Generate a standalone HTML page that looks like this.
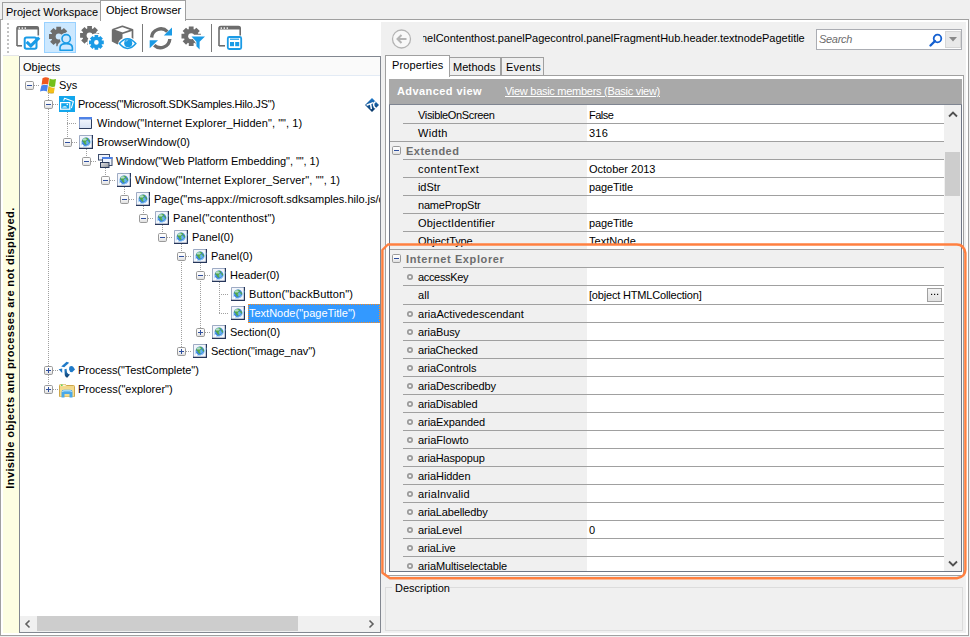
<!DOCTYPE html>
<html><head><meta charset="utf-8">
<style>
*{margin:0;padding:0;box-sizing:border-box}
html,body{width:970px;height:637px;overflow:hidden;background:#f0f0f0;font-family:"Liberation Sans",sans-serif;font-size:11px;color:#000}
.a{position:absolute}
.t{position:absolute;white-space:nowrap;line-height:13px}
svg{position:absolute;overflow:visible}
</style></head><body>

<div class="a" style="left:0px;top:19px;width:969px;height:617px;background:#fff;border:1px solid #a0a0a0"></div>
<div class="a" style="left:2px;top:2px;width:99px;height:18px;background:#f0f0f0;border:1px solid #a0a0a0;border-bottom:none"></div>
<div class="t" style="left:6px;top:6px;">Project Workspace</div>
<div class="a" style="left:100px;top:0px;width:86px;height:21px;background:#fff;border:1px solid #a0a0a0;border-bottom:none"></div>
<div class="t" style="left:106px;top:4px;">Object Browser</div>
<div class="a" style="left:3px;top:55px;width:16px;height:1px;background:#e4e6ea;"></div>
<div class="a" style="left:3px;top:56px;width:16px;height:577px;background:#fdfee2;"></div>
<div class="a" style="left:19px;top:56px;width:362px;height:577px;background:#fff;border:1px solid #828790"></div>
<div class="a" style="left:7px;top:23px;width:2px;height:30px;background:repeating-linear-gradient(to bottom,#c2c2c2 0 2px,transparent 2px 4px)"></div>
<svg style="left:0px;top:0px;" width="250" height="56" viewBox="0 0 250 56"><path d="M17 46V28.5a1.8 1.8 0 0 1 1.8-1.8H36.5a1.8 1.8 0 0 1 1.8 1.8V35.5" fill="none" stroke="#6d6d6d" stroke-width="1.6"/><rect x="17" y="26.5" width="21.3" height="3" fill="#6d6d6d"/><path d="M17 45.8H22" stroke="#6d6d6d" stroke-width="1.6"/><rect x="18.6" y="27.4" width="1.4" height="1.4" fill="#fff"/><rect x="21.6" y="27.4" width="1.4" height="1.4" fill="#fff"/><rect x="24.6" y="27.4" width="1.4" height="1.4" fill="#fff"/><rect x="24.7" y="37.4" width="11.8" height="11.4" rx="1.8" fill="#fff" stroke="#1a9be6" stroke-width="2"/><path d="M39 36.2L40.2 37.6" stroke="#fff" stroke-width="3"/><path d="M26.6 41.8l4.2 4 8.4-8.2" fill="none" stroke="#1a9be6" stroke-width="3.2" stroke-linejoin="miter"/></svg>
<div class="a" style="left:44px;top:22px;width:32px;height:31px;background:#cce8ff;border:1px solid #99d1ff"></div>
<svg style="left:0px;top:0px;" width="250" height="56" viewBox="0 0 250 56"><path d="M65.54 33.67 L65.70 34.11 L68.41 34.09 L68.41 38.91 L65.70 38.89 L65.54 39.33 L65.34 39.76 L67.27 41.66 L63.86 45.07 L61.96 43.14 L61.53 43.34 L61.09 43.50 L61.11 46.21 L56.29 46.21 L56.31 43.50 L55.87 43.34 L55.44 43.14 L53.54 45.07 L50.13 41.66 L52.06 39.76 L51.86 39.33 L51.70 38.89 L48.99 38.91 L48.99 34.09 L51.70 34.11 L51.86 33.67 L52.06 33.24 L50.13 31.34 L53.54 27.93 L55.44 29.86 L55.87 29.66 L56.31 29.50 L56.29 26.79 L61.11 26.79 L61.09 29.50 L61.53 29.66 L61.96 29.86 L63.86 27.93 L67.27 31.34 L65.34 33.24Z" fill="#6d6d6d"/><circle cx="66" cy="39" r="6.2" fill="#cce8ff"/><rect x="57.5" y="41.5" width="17" height="11" rx="5" fill="#cce8ff"/><circle cx="58.7" cy="36.5" r="3" fill="#cce8ff"/><path d="M60 50.2V47.8C60 45 62.6 43.6 66.2 43.6S72.4 45 72.4 47.8V50.2z" fill="#cce8ff" stroke="#1a9be6" stroke-width="1.6" stroke-linejoin="round"/><circle cx="66.2" cy="38.8" r="4.2" fill="#cce8ff" stroke="#1a9be6" stroke-width="1.6"/></svg>
<svg style="left:0px;top:0px;" width="250" height="56" viewBox="0 0 250 56"><path d="M96.25 32.64 L96.41 33.08 L99.11 33.04 L99.11 37.76 L96.41 37.72 L96.25 38.16 L96.06 38.58 L98.00 40.45 L94.65 43.80 L92.78 41.86 L92.36 42.05 L91.92 42.21 L91.96 44.91 L87.24 44.91 L87.28 42.21 L86.84 42.05 L86.42 41.86 L84.55 43.80 L81.20 40.45 L83.14 38.58 L82.95 38.16 L82.79 37.72 L80.09 37.76 L80.09 33.04 L82.79 33.08 L82.95 32.64 L83.14 32.22 L81.20 30.35 L84.55 27.00 L86.42 28.94 L86.84 28.75 L87.28 28.59 L87.24 25.89 L91.96 25.89 L91.92 28.59 L92.36 28.75 L92.78 28.94 L94.65 27.00 L98.00 30.35 L96.06 32.22Z" fill="#6d6d6d"/><circle cx="89.6" cy="35.4" r="3" fill="#fff"/><circle cx="96.4" cy="42.4" r="9.2" fill="#fff"/><path d="M101.76 40.18 L101.89 40.53 L103.78 40.57 L103.78 44.23 L101.89 44.27 L101.76 44.62 L101.61 44.96 L102.91 46.32 L100.32 48.91 L98.96 47.61 L98.62 47.76 L98.27 47.89 L98.23 49.78 L94.57 49.78 L94.53 47.89 L94.18 47.76 L93.84 47.61 L92.48 48.91 L89.89 46.32 L91.19 44.96 L91.04 44.62 L90.91 44.27 L89.02 44.23 L89.02 40.57 L90.91 40.53 L91.04 40.18 L91.19 39.84 L89.89 38.48 L92.48 35.89 L93.84 37.19 L94.18 37.04 L94.53 36.91 L94.57 35.02 L98.23 35.02 L98.27 36.91 L98.62 37.04 L98.96 37.19 L100.32 35.89 L102.91 38.48 L101.61 39.84Z M98.70 42.40 A2.3 2.3 0 1 0 94.10 42.40 A2.3 2.3 0 1 0 98.70 42.40Z" fill="#1a9be6" fill-rule="evenodd"/></svg>
<svg style="left:0px;top:0px;" width="250" height="56" viewBox="0 0 250 56"><path d="M112.5 29.8L122.4 26.3 132.5 29.9V40" fill="none" stroke="#6d6d6d" stroke-width="1.7" stroke-linejoin="round"/><path d="M112.5 29.8L122.5 33.2 132.5 29.9" fill="none" stroke="#6d6d6d" stroke-width="1.7" stroke-linejoin="round"/><path d="M111.8 29.6L122.5 33.4V40.5L117.5 44.6 111.8 41.6z" fill="#6d6d6d"/><ellipse cx="127.6" cy="43.6" rx="9.6" ry="6.3" fill="#fff"/><path d="M119.4 43.6Q127.6 33.8 135.8 43.6Q127.6 53.4 119.4 43.6z" fill="#fff" stroke="#1a9be6" stroke-width="1.6"/><circle cx="128.2" cy="43.2" r="4" fill="#1a9be6"/><path d="M126 41.5a2.2 2.2 0 0 1 1.6-1.3" stroke="#fff" stroke-width=".7" fill="none"/></svg>
<div class="a" style="left:142px;top:24px;width:1px;height:28px;background:#7a7a7a;"></div>
<div class="a" style="left:211px;top:24px;width:1px;height:28px;background:#7a7a7a;"></div>
<svg style="left:0px;top:0px;" width="250" height="56" viewBox="0 0 250 56"><path d="M151.6 37.5A9.3 9.3 0 0 1 167.4 31.6" fill="none" stroke="#6d6d6d" stroke-width="3.4"/><path d="M169.8 39A9.3 9.3 0 0 1 154.2 45.2" fill="none" stroke="#6d6d6d" stroke-width="3.4"/><path d="M163.8 35.6L172 27.5V35.6z" fill="#1a9be6"/><path d="M149.7 40.2H158L149.7 48.2z" fill="#1a9be6"/></svg>
<svg style="left:0px;top:0px;" width="250" height="56" viewBox="0 0 250 56"><path d="M198.04 33.37 L198.20 33.81 L200.91 33.79 L200.91 38.61 L198.20 38.59 L198.04 39.03 L197.84 39.46 L199.77 41.36 L196.36 44.77 L194.46 42.84 L194.03 43.04 L193.59 43.20 L193.61 45.91 L188.79 45.91 L188.81 43.20 L188.37 43.04 L187.94 42.84 L186.04 44.77 L182.63 41.36 L184.56 39.46 L184.36 39.03 L184.20 38.59 L181.49 38.61 L181.49 33.79 L184.20 33.81 L184.36 33.37 L184.56 32.94 L182.63 31.04 L186.04 27.63 L187.94 29.56 L188.37 29.36 L188.81 29.20 L188.79 26.49 L193.61 26.49 L193.59 29.20 L194.03 29.36 L194.46 29.56 L196.36 27.63 L199.77 31.04 L197.84 32.94Z" fill="#6d6d6d"/><circle cx="191.2" cy="36.2" r="3" fill="#fff"/><path d="M189.5 34.8H207L200.8 42.5V51.3L195.5 47V42.5z" fill="#fff"/><path d="M191.5 36.4H205L199.6 41.8V49.4L196.4 46.2V41.8z" fill="#1a9be6"/></svg>
<svg style="left:0px;top:0px;" width="250" height="56" viewBox="0 0 250 56"><path d="M219 46V28.3a1.8 1.8 0 0 1 1.8-1.8H238.4a1.8 1.8 0 0 1 1.8 1.8V35.5" fill="none" stroke="#6d6d6d" stroke-width="1.6"/><rect x="219" y="26.5" width="21.2" height="3" fill="#6d6d6d"/><path d="M219 45.8H225" stroke="#6d6d6d" stroke-width="1.6"/><rect x="220.6" y="27.4" width="1.4" height="1.4" fill="#fff"/><rect x="223.6" y="27.4" width="1.4" height="1.4" fill="#fff"/><rect x="226.6" y="27.4" width="1.4" height="1.4" fill="#fff"/><rect x="227.8" y="37" width="13.4" height="12" rx="1.5" fill="#fff" stroke="#1a9be6" stroke-width="1.8"/><rect x="230" y="38.6" width="9" height="1.2" fill="#1a9be6"/><rect x="230" y="42" width="4" height="4.2" fill="#1a9be6"/><rect x="235.2" y="42" width="4" height="4.2" fill="#1a9be6"/></svg>
<div class="a" style="left:20px;top:57px;width:360px;height:559px;overflow:hidden">
<div class="a" style="left:0px;top:0px;width:360px;height:18px;background:#fafafa;"></div>
<div class="a" style="left:0px;top:18px;width:360px;height:1px;background:#e3ebf5;"></div>
<div class="t" style="left:3px;top:2px;line-height:16px">Objects</div>
<div class="a" style="left:28px;top:36px;width:1px;height:297px;background:repeating-linear-gradient(to bottom,#a0a0a0 0 1px,transparent 1px 2px)"></div>
<div class="a" style="left:47px;top:55px;width:1px;height:31px;background:repeating-linear-gradient(to bottom,#a0a0a0 0 1px,transparent 1px 2px)"></div>
<div class="a" style="left:66px;top:92px;width:1px;height:13px;background:repeating-linear-gradient(to bottom,#a0a0a0 0 1px,transparent 1px 2px)"></div>
<div class="a" style="left:85px;top:111px;width:1px;height:13px;background:repeating-linear-gradient(to bottom,#a0a0a0 0 1px,transparent 1px 2px)"></div>
<div class="a" style="left:104px;top:130px;width:1px;height:13px;background:repeating-linear-gradient(to bottom,#a0a0a0 0 1px,transparent 1px 2px)"></div>
<div class="a" style="left:123px;top:149px;width:1px;height:13px;background:repeating-linear-gradient(to bottom,#a0a0a0 0 1px,transparent 1px 2px)"></div>
<div class="a" style="left:142px;top:168px;width:1px;height:13px;background:repeating-linear-gradient(to bottom,#a0a0a0 0 1px,transparent 1px 2px)"></div>
<div class="a" style="left:161px;top:187px;width:1px;height:108px;background:repeating-linear-gradient(to bottom,#a0a0a0 0 1px,transparent 1px 2px)"></div>
<div class="a" style="left:180px;top:206px;width:1px;height:70px;background:repeating-linear-gradient(to bottom,#a0a0a0 0 1px,transparent 1px 2px)"></div>
<div class="a" style="left:199px;top:225px;width:1px;height:32px;background:repeating-linear-gradient(to bottom,#a0a0a0 0 1px,transparent 1px 2px)"></div>
<div class="a" style="left:14px;top:28px;width:5px;height:1px;background:repeating-linear-gradient(to right,#a0a0a0 0 1px,transparent 1px 2px)"></div>
<svg style="left:5px;top:24px;" width="9" height="9" viewBox="0 0 9 9"><defs><linearGradient id="bg" x1="0" y1="0" x2="0" y2="1"><stop offset="0" stop-color="#fff"/><stop offset="0.5" stop-color="#f6f6f6"/><stop offset="1" stop-color="#dcdcdc"/></linearGradient></defs><rect x="0.5" y="0.5" width="8" height="8" rx="1.2" fill="url(#bg)" stroke="#9a9a9a"/><rect x="2" y="4" width="5" height="1" fill="#2f4f9e"/></svg>
<svg style="left:20px;top:20px;" width="16" height="16" viewBox="0 0 16 16"><path d="M2.5 1.2Q5.5-.4 9 1L8.2 7.6Q5 6.4 1.6 7.8z" fill="#f0581e"/><path d="M9.6 1.5Q12.5 3 16 2L15 9.6Q11.8 10.6 8.8 8.4z" fill="#74c01a"/><path d="M1.4 8.4Q4.6 7 7.9 8.3L7 14.4Q3.8 13.2 0 14.4z" fill="#4a82ee"/><path d="M8.6 9.2Q11.6 11.2 14.8 10.4L13.8 16Q10.6 17 7.6 15.2z" fill="#f4bf1a"/><path d="M8.4 14.8L9.2 8.8M7.6 15.4Q10.6 17 13.8 16" fill="none" stroke="#7a6a20" stroke-width=".6" opacity=".6"/></svg>
<div class="t" style="left:39px;top:19px;line-height:19px">Sys</div>
<div class="a" style="left:33px;top:47px;width:5px;height:1px;background:repeating-linear-gradient(to right,#a0a0a0 0 1px,transparent 1px 2px)"></div>
<svg style="left:24px;top:43px;" width="9" height="9" viewBox="0 0 9 9"><defs><linearGradient id="bg" x1="0" y1="0" x2="0" y2="1"><stop offset="0" stop-color="#fff"/><stop offset="0.5" stop-color="#f6f6f6"/><stop offset="1" stop-color="#dcdcdc"/></linearGradient></defs><rect x="0.5" y="0.5" width="8" height="8" rx="1.2" fill="url(#bg)" stroke="#9a9a9a"/><rect x="2" y="4" width="5" height="1" fill="#2f4f9e"/></svg>
<svg style="left:39px;top:39px;" width="16" height="16" viewBox="0 0 16 16"><rect x="0" y="0" width="16" height="16" fill="#12a6ec"/><path d="M4.6 4.6L5.6 2.3 14.4 5.4 12.4 12.2" fill="none" stroke="#fff" stroke-width="1.1" stroke-linejoin="round"/><rect x="1.6" y="6.6" width="9.2" height="6.6" fill="#12a6ec" stroke="#fff" stroke-width="1.2"/><path d="M3.2 11.6c.4-1 1.2-1.4 1.9-1 .4-.6 1.2-.6 1.6 0 .6-.1 1.2.3 1.3 1z" fill="#fff"/><circle cx="8.3" cy="8.5" r=".8" fill="#fff"/></svg>
<div class="t" style="left:58px;top:38px;line-height:19px;letter-spacing:-0.231px">Process(&quot;Microsoft.SDKSamples.Hilo.JS&quot;)</div>
<div class="a" style="left:47px;top:66px;width:10px;height:1px;background:repeating-linear-gradient(to right,#a0a0a0 0 1px,transparent 1px 2px)"></div>
<svg style="left:59px;top:60px;" width="13" height="12" viewBox="0 0 13 12"><defs><linearGradient id="wg" x1="0" y1="0" x2="0" y2="1"><stop offset="0" stop-color="#f8fbff"/><stop offset="1" stop-color="#d4e0f2"/></linearGradient></defs><rect x="0" y="0" width="13" height="12" fill="url(#wg)"/><path d="M0.5 11.5V0.5H12.5" fill="none" stroke="#8ca0c8"/><path d="M0 11.5H12.5V0" fill="none" stroke="#2c3c5c"/><rect x="0" y="0" width="13" height="2.5" fill="#4f82e6"/></svg>
<div class="t" style="left:77px;top:57px;line-height:19px;letter-spacing:0.061px">Window(&quot;Internet Explorer_Hidden&quot;, &quot;&quot;, 1)</div>
<div class="a" style="left:52px;top:85px;width:5px;height:1px;background:repeating-linear-gradient(to right,#a0a0a0 0 1px,transparent 1px 2px)"></div>
<svg style="left:43px;top:81px;" width="9" height="9" viewBox="0 0 9 9"><defs><linearGradient id="bg" x1="0" y1="0" x2="0" y2="1"><stop offset="0" stop-color="#fff"/><stop offset="0.5" stop-color="#f6f6f6"/><stop offset="1" stop-color="#dcdcdc"/></linearGradient></defs><rect x="0.5" y="0.5" width="8" height="8" rx="1.2" fill="url(#bg)" stroke="#9a9a9a"/><rect x="2" y="4" width="5" height="1" fill="#2f4f9e"/></svg>
<svg style="left:59px;top:78px;" width="14" height="14" viewBox="0 0 14 14"><rect x="0" y="0" width="14" height="14" fill="#f2f5fb"/><path d="M0.5 13.5V0.5H13.5" fill="none" stroke="#9eabc4"/><path d="M0 13.4H13.4V0" fill="none" stroke="#26365a" stroke-width="1.2"/><circle cx="7" cy="6.8" r="4.4" fill="#3f86e0"/><path d="M4.4 3.6c1.4-1 3.2-1 4.4-.4.8.5.4 1.4-.4 1.7-.9.4-1.4 1.2-.8 2 .5.7.4 1.9-.3 2.6-.8.6-1.8 0-2.1-.9-.3-1-1-1.4-1.6-2-.6-.8-.2-2.3.8-3z" fill="#52a848"/><path d="M9.6 4.4c.9.7 1.6 1.8 1.6 2.9-.7.3-1.5-.2-1.7-.9-.3-.6-.4-1.4.1-2z" fill="#52a848"/><ellipse cx="5.6" cy="4.4" rx="2" ry="1.2" fill="#d8f4ff" opacity=".7"/><ellipse cx="8.2" cy="7.6" rx="1.6" ry="1.8" fill="#7fd4ff" opacity=".55"/><path d="M3 10.8c-1-1.2-.6-2.6.2-3.6M4 11.2c2.4.8 5.6-.6 7.6-3.4 1-1.4 1.6-3 1.2-4.2" fill="none" stroke="#9ad4fa" stroke-width=".8"/><circle cx="3.4" cy="10.6" r=".9" fill="#fff"/></svg>
<div class="t" style="left:77px;top:76px;line-height:19px">BrowserWindow(0)</div>
<div class="a" style="left:71px;top:104px;width:5px;height:1px;background:repeating-linear-gradient(to right,#a0a0a0 0 1px,transparent 1px 2px)"></div>
<svg style="left:62px;top:100px;" width="9" height="9" viewBox="0 0 9 9"><defs><linearGradient id="bg" x1="0" y1="0" x2="0" y2="1"><stop offset="0" stop-color="#fff"/><stop offset="0.5" stop-color="#f6f6f6"/><stop offset="1" stop-color="#dcdcdc"/></linearGradient></defs><rect x="0.5" y="0.5" width="8" height="8" rx="1.2" fill="url(#bg)" stroke="#9a9a9a"/><rect x="2" y="4" width="5" height="1" fill="#2f4f9e"/></svg>
<svg style="left:78px;top:97px;" width="15" height="14" viewBox="0 0 15 14"><rect x="0.5" y="0.5" width="11" height="5.5" fill="#eef3fb" stroke="#3c4c6c"/><rect x="4.5" y="3.5" width="9.5" height="8" fill="#eef4fd" stroke="#3c4c6c"/><rect x="4" y="3" width="10.5" height="2" fill="#4f82e6"/><defs><linearGradient id="mg" x1="0" y1="0" x2="1" y2="1"><stop offset="0" stop-color="#e8e8e8"/><stop offset="1" stop-color="#8a8f98"/></linearGradient></defs><rect x="2.5" y="8.5" width="8.5" height="5" fill="url(#mg)" stroke="#2c3c5c"/></svg>
<div class="t" style="left:96px;top:95px;line-height:19px;letter-spacing:-0.059px">Window(&quot;Web Platform Embedding&quot;, &quot;&quot;, 1)</div>
<div class="a" style="left:90px;top:123px;width:5px;height:1px;background:repeating-linear-gradient(to right,#a0a0a0 0 1px,transparent 1px 2px)"></div>
<svg style="left:81px;top:119px;" width="9" height="9" viewBox="0 0 9 9"><defs><linearGradient id="bg" x1="0" y1="0" x2="0" y2="1"><stop offset="0" stop-color="#fff"/><stop offset="0.5" stop-color="#f6f6f6"/><stop offset="1" stop-color="#dcdcdc"/></linearGradient></defs><rect x="0.5" y="0.5" width="8" height="8" rx="1.2" fill="url(#bg)" stroke="#9a9a9a"/><rect x="2" y="4" width="5" height="1" fill="#2f4f9e"/></svg>
<svg style="left:97px;top:116px;" width="14" height="14" viewBox="0 0 14 14"><rect x="0" y="0" width="14" height="14" fill="#f2f5fb"/><path d="M0.5 13.5V0.5H13.5" fill="none" stroke="#9eabc4"/><path d="M0 13.4H13.4V0" fill="none" stroke="#26365a" stroke-width="1.2"/><circle cx="7" cy="6.8" r="4.4" fill="#3f86e0"/><path d="M4.4 3.6c1.4-1 3.2-1 4.4-.4.8.5.4 1.4-.4 1.7-.9.4-1.4 1.2-.8 2 .5.7.4 1.9-.3 2.6-.8.6-1.8 0-2.1-.9-.3-1-1-1.4-1.6-2-.6-.8-.2-2.3.8-3z" fill="#52a848"/><path d="M9.6 4.4c.9.7 1.6 1.8 1.6 2.9-.7.3-1.5-.2-1.7-.9-.3-.6-.4-1.4.1-2z" fill="#52a848"/><ellipse cx="5.6" cy="4.4" rx="2" ry="1.2" fill="#d8f4ff" opacity=".7"/><ellipse cx="8.2" cy="7.6" rx="1.6" ry="1.8" fill="#7fd4ff" opacity=".55"/><path d="M3 10.8c-1-1.2-.6-2.6.2-3.6M4 11.2c2.4.8 5.6-.6 7.6-3.4 1-1.4 1.6-3 1.2-4.2" fill="none" stroke="#9ad4fa" stroke-width=".8"/><circle cx="3.4" cy="10.6" r=".9" fill="#fff"/></svg>
<div class="t" style="left:115px;top:114px;line-height:19px;letter-spacing:0.117px">Window(&quot;Internet Explorer_Server&quot;, &quot;&quot;, 1)</div>
<div class="a" style="left:109px;top:142px;width:5px;height:1px;background:repeating-linear-gradient(to right,#a0a0a0 0 1px,transparent 1px 2px)"></div>
<svg style="left:100px;top:138px;" width="9" height="9" viewBox="0 0 9 9"><defs><linearGradient id="bg" x1="0" y1="0" x2="0" y2="1"><stop offset="0" stop-color="#fff"/><stop offset="0.5" stop-color="#f6f6f6"/><stop offset="1" stop-color="#dcdcdc"/></linearGradient></defs><rect x="0.5" y="0.5" width="8" height="8" rx="1.2" fill="url(#bg)" stroke="#9a9a9a"/><rect x="2" y="4" width="5" height="1" fill="#2f4f9e"/></svg>
<svg style="left:116px;top:135px;" width="14" height="14" viewBox="0 0 14 14"><rect x="0" y="0" width="14" height="14" fill="#f2f5fb"/><path d="M0.5 13.5V0.5H13.5" fill="none" stroke="#9eabc4"/><path d="M0 13.4H13.4V0" fill="none" stroke="#26365a" stroke-width="1.2"/><circle cx="7" cy="6.8" r="4.4" fill="#3f86e0"/><path d="M4.4 3.6c1.4-1 3.2-1 4.4-.4.8.5.4 1.4-.4 1.7-.9.4-1.4 1.2-.8 2 .5.7.4 1.9-.3 2.6-.8.6-1.8 0-2.1-.9-.3-1-1-1.4-1.6-2-.6-.8-.2-2.3.8-3z" fill="#52a848"/><path d="M9.6 4.4c.9.7 1.6 1.8 1.6 2.9-.7.3-1.5-.2-1.7-.9-.3-.6-.4-1.4.1-2z" fill="#52a848"/><ellipse cx="5.6" cy="4.4" rx="2" ry="1.2" fill="#d8f4ff" opacity=".7"/><ellipse cx="8.2" cy="7.6" rx="1.6" ry="1.8" fill="#7fd4ff" opacity=".55"/><path d="M3 10.8c-1-1.2-.6-2.6.2-3.6M4 11.2c2.4.8 5.6-.6 7.6-3.4 1-1.4 1.6-3 1.2-4.2" fill="none" stroke="#9ad4fa" stroke-width=".8"/><circle cx="3.4" cy="10.6" r=".9" fill="#fff"/></svg>
<div class="t" style="left:134px;top:133px;line-height:19px">Page(&quot;ms-appx://microsoft.sdksamples.hilo.js/default.html&quot;)</div>
<div class="a" style="left:128px;top:161px;width:5px;height:1px;background:repeating-linear-gradient(to right,#a0a0a0 0 1px,transparent 1px 2px)"></div>
<svg style="left:119px;top:157px;" width="9" height="9" viewBox="0 0 9 9"><defs><linearGradient id="bg" x1="0" y1="0" x2="0" y2="1"><stop offset="0" stop-color="#fff"/><stop offset="0.5" stop-color="#f6f6f6"/><stop offset="1" stop-color="#dcdcdc"/></linearGradient></defs><rect x="0.5" y="0.5" width="8" height="8" rx="1.2" fill="url(#bg)" stroke="#9a9a9a"/><rect x="2" y="4" width="5" height="1" fill="#2f4f9e"/></svg>
<svg style="left:135px;top:154px;" width="14" height="14" viewBox="0 0 14 14"><rect x="0" y="0" width="14" height="14" fill="#f2f5fb"/><path d="M0.5 13.5V0.5H13.5" fill="none" stroke="#9eabc4"/><path d="M0 13.4H13.4V0" fill="none" stroke="#26365a" stroke-width="1.2"/><circle cx="7" cy="6.8" r="4.4" fill="#3f86e0"/><path d="M4.4 3.6c1.4-1 3.2-1 4.4-.4.8.5.4 1.4-.4 1.7-.9.4-1.4 1.2-.8 2 .5.7.4 1.9-.3 2.6-.8.6-1.8 0-2.1-.9-.3-1-1-1.4-1.6-2-.6-.8-.2-2.3.8-3z" fill="#52a848"/><path d="M9.6 4.4c.9.7 1.6 1.8 1.6 2.9-.7.3-1.5-.2-1.7-.9-.3-.6-.4-1.4.1-2z" fill="#52a848"/><ellipse cx="5.6" cy="4.4" rx="2" ry="1.2" fill="#d8f4ff" opacity=".7"/><ellipse cx="8.2" cy="7.6" rx="1.6" ry="1.8" fill="#7fd4ff" opacity=".55"/><path d="M3 10.8c-1-1.2-.6-2.6.2-3.6M4 11.2c2.4.8 5.6-.6 7.6-3.4 1-1.4 1.6-3 1.2-4.2" fill="none" stroke="#9ad4fa" stroke-width=".8"/><circle cx="3.4" cy="10.6" r=".9" fill="#fff"/></svg>
<div class="t" style="left:153px;top:152px;line-height:19px;letter-spacing:0.100px">Panel(&quot;contenthost&quot;)</div>
<div class="a" style="left:147px;top:180px;width:5px;height:1px;background:repeating-linear-gradient(to right,#a0a0a0 0 1px,transparent 1px 2px)"></div>
<svg style="left:138px;top:176px;" width="9" height="9" viewBox="0 0 9 9"><defs><linearGradient id="bg" x1="0" y1="0" x2="0" y2="1"><stop offset="0" stop-color="#fff"/><stop offset="0.5" stop-color="#f6f6f6"/><stop offset="1" stop-color="#dcdcdc"/></linearGradient></defs><rect x="0.5" y="0.5" width="8" height="8" rx="1.2" fill="url(#bg)" stroke="#9a9a9a"/><rect x="2" y="4" width="5" height="1" fill="#2f4f9e"/></svg>
<svg style="left:154px;top:173px;" width="14" height="14" viewBox="0 0 14 14"><rect x="0" y="0" width="14" height="14" fill="#f2f5fb"/><path d="M0.5 13.5V0.5H13.5" fill="none" stroke="#9eabc4"/><path d="M0 13.4H13.4V0" fill="none" stroke="#26365a" stroke-width="1.2"/><circle cx="7" cy="6.8" r="4.4" fill="#3f86e0"/><path d="M4.4 3.6c1.4-1 3.2-1 4.4-.4.8.5.4 1.4-.4 1.7-.9.4-1.4 1.2-.8 2 .5.7.4 1.9-.3 2.6-.8.6-1.8 0-2.1-.9-.3-1-1-1.4-1.6-2-.6-.8-.2-2.3.8-3z" fill="#52a848"/><path d="M9.6 4.4c.9.7 1.6 1.8 1.6 2.9-.7.3-1.5-.2-1.7-.9-.3-.6-.4-1.4.1-2z" fill="#52a848"/><ellipse cx="5.6" cy="4.4" rx="2" ry="1.2" fill="#d8f4ff" opacity=".7"/><ellipse cx="8.2" cy="7.6" rx="1.6" ry="1.8" fill="#7fd4ff" opacity=".55"/><path d="M3 10.8c-1-1.2-.6-2.6.2-3.6M4 11.2c2.4.8 5.6-.6 7.6-3.4 1-1.4 1.6-3 1.2-4.2" fill="none" stroke="#9ad4fa" stroke-width=".8"/><circle cx="3.4" cy="10.6" r=".9" fill="#fff"/></svg>
<div class="t" style="left:172px;top:171px;line-height:19px">Panel(0)</div>
<div class="a" style="left:166px;top:199px;width:5px;height:1px;background:repeating-linear-gradient(to right,#a0a0a0 0 1px,transparent 1px 2px)"></div>
<svg style="left:157px;top:195px;" width="9" height="9" viewBox="0 0 9 9"><defs><linearGradient id="bg" x1="0" y1="0" x2="0" y2="1"><stop offset="0" stop-color="#fff"/><stop offset="0.5" stop-color="#f6f6f6"/><stop offset="1" stop-color="#dcdcdc"/></linearGradient></defs><rect x="0.5" y="0.5" width="8" height="8" rx="1.2" fill="url(#bg)" stroke="#9a9a9a"/><rect x="2" y="4" width="5" height="1" fill="#2f4f9e"/></svg>
<svg style="left:173px;top:192px;" width="14" height="14" viewBox="0 0 14 14"><rect x="0" y="0" width="14" height="14" fill="#f2f5fb"/><path d="M0.5 13.5V0.5H13.5" fill="none" stroke="#9eabc4"/><path d="M0 13.4H13.4V0" fill="none" stroke="#26365a" stroke-width="1.2"/><circle cx="7" cy="6.8" r="4.4" fill="#3f86e0"/><path d="M4.4 3.6c1.4-1 3.2-1 4.4-.4.8.5.4 1.4-.4 1.7-.9.4-1.4 1.2-.8 2 .5.7.4 1.9-.3 2.6-.8.6-1.8 0-2.1-.9-.3-1-1-1.4-1.6-2-.6-.8-.2-2.3.8-3z" fill="#52a848"/><path d="M9.6 4.4c.9.7 1.6 1.8 1.6 2.9-.7.3-1.5-.2-1.7-.9-.3-.6-.4-1.4.1-2z" fill="#52a848"/><ellipse cx="5.6" cy="4.4" rx="2" ry="1.2" fill="#d8f4ff" opacity=".7"/><ellipse cx="8.2" cy="7.6" rx="1.6" ry="1.8" fill="#7fd4ff" opacity=".55"/><path d="M3 10.8c-1-1.2-.6-2.6.2-3.6M4 11.2c2.4.8 5.6-.6 7.6-3.4 1-1.4 1.6-3 1.2-4.2" fill="none" stroke="#9ad4fa" stroke-width=".8"/><circle cx="3.4" cy="10.6" r=".9" fill="#fff"/></svg>
<div class="t" style="left:191px;top:190px;line-height:19px">Panel(0)</div>
<div class="a" style="left:185px;top:218px;width:5px;height:1px;background:repeating-linear-gradient(to right,#a0a0a0 0 1px,transparent 1px 2px)"></div>
<svg style="left:176px;top:214px;" width="9" height="9" viewBox="0 0 9 9"><defs><linearGradient id="bg" x1="0" y1="0" x2="0" y2="1"><stop offset="0" stop-color="#fff"/><stop offset="0.5" stop-color="#f6f6f6"/><stop offset="1" stop-color="#dcdcdc"/></linearGradient></defs><rect x="0.5" y="0.5" width="8" height="8" rx="1.2" fill="url(#bg)" stroke="#9a9a9a"/><rect x="2" y="4" width="5" height="1" fill="#2f4f9e"/></svg>
<svg style="left:192px;top:211px;" width="14" height="14" viewBox="0 0 14 14"><rect x="0" y="0" width="14" height="14" fill="#f2f5fb"/><path d="M0.5 13.5V0.5H13.5" fill="none" stroke="#9eabc4"/><path d="M0 13.4H13.4V0" fill="none" stroke="#26365a" stroke-width="1.2"/><circle cx="7" cy="6.8" r="4.4" fill="#3f86e0"/><path d="M4.4 3.6c1.4-1 3.2-1 4.4-.4.8.5.4 1.4-.4 1.7-.9.4-1.4 1.2-.8 2 .5.7.4 1.9-.3 2.6-.8.6-1.8 0-2.1-.9-.3-1-1-1.4-1.6-2-.6-.8-.2-2.3.8-3z" fill="#52a848"/><path d="M9.6 4.4c.9.7 1.6 1.8 1.6 2.9-.7.3-1.5-.2-1.7-.9-.3-.6-.4-1.4.1-2z" fill="#52a848"/><ellipse cx="5.6" cy="4.4" rx="2" ry="1.2" fill="#d8f4ff" opacity=".7"/><ellipse cx="8.2" cy="7.6" rx="1.6" ry="1.8" fill="#7fd4ff" opacity=".55"/><path d="M3 10.8c-1-1.2-.6-2.6.2-3.6M4 11.2c2.4.8 5.6-.6 7.6-3.4 1-1.4 1.6-3 1.2-4.2" fill="none" stroke="#9ad4fa" stroke-width=".8"/><circle cx="3.4" cy="10.6" r=".9" fill="#fff"/></svg>
<div class="t" style="left:210px;top:209px;line-height:19px">Header(0)</div>
<div class="a" style="left:199px;top:237px;width:10px;height:1px;background:repeating-linear-gradient(to right,#a0a0a0 0 1px,transparent 1px 2px)"></div>
<svg style="left:211px;top:230px;" width="14" height="14" viewBox="0 0 14 14"><rect x="0" y="0" width="14" height="14" fill="#f2f5fb"/><path d="M0.5 13.5V0.5H13.5" fill="none" stroke="#9eabc4"/><path d="M0 13.4H13.4V0" fill="none" stroke="#26365a" stroke-width="1.2"/><circle cx="7" cy="6.8" r="4.4" fill="#3f86e0"/><path d="M4.4 3.6c1.4-1 3.2-1 4.4-.4.8.5.4 1.4-.4 1.7-.9.4-1.4 1.2-.8 2 .5.7.4 1.9-.3 2.6-.8.6-1.8 0-2.1-.9-.3-1-1-1.4-1.6-2-.6-.8-.2-2.3.8-3z" fill="#52a848"/><path d="M9.6 4.4c.9.7 1.6 1.8 1.6 2.9-.7.3-1.5-.2-1.7-.9-.3-.6-.4-1.4.1-2z" fill="#52a848"/><ellipse cx="5.6" cy="4.4" rx="2" ry="1.2" fill="#d8f4ff" opacity=".7"/><ellipse cx="8.2" cy="7.6" rx="1.6" ry="1.8" fill="#7fd4ff" opacity=".55"/><path d="M3 10.8c-1-1.2-.6-2.6.2-3.6M4 11.2c2.4.8 5.6-.6 7.6-3.4 1-1.4 1.6-3 1.2-4.2" fill="none" stroke="#9ad4fa" stroke-width=".8"/><circle cx="3.4" cy="10.6" r=".9" fill="#fff"/></svg>
<div class="t" style="left:229px;top:228px;line-height:19px;letter-spacing:0.100px">Button(&quot;backButton&quot;)</div>
<div class="a" style="left:199px;top:256px;width:10px;height:1px;background:repeating-linear-gradient(to right,#a0a0a0 0 1px,transparent 1px 2px)"></div>
<svg style="left:211px;top:249px;" width="14" height="14" viewBox="0 0 14 14"><rect x="0" y="0" width="14" height="14" fill="#f2f5fb"/><path d="M0.5 13.5V0.5H13.5" fill="none" stroke="#9eabc4"/><path d="M0 13.4H13.4V0" fill="none" stroke="#26365a" stroke-width="1.2"/><circle cx="7" cy="6.8" r="4.4" fill="#3f86e0"/><path d="M4.4 3.6c1.4-1 3.2-1 4.4-.4.8.5.4 1.4-.4 1.7-.9.4-1.4 1.2-.8 2 .5.7.4 1.9-.3 2.6-.8.6-1.8 0-2.1-.9-.3-1-1-1.4-1.6-2-.6-.8-.2-2.3.8-3z" fill="#52a848"/><path d="M9.6 4.4c.9.7 1.6 1.8 1.6 2.9-.7.3-1.5-.2-1.7-.9-.3-.6-.4-1.4.1-2z" fill="#52a848"/><ellipse cx="5.6" cy="4.4" rx="2" ry="1.2" fill="#d8f4ff" opacity=".7"/><ellipse cx="8.2" cy="7.6" rx="1.6" ry="1.8" fill="#7fd4ff" opacity=".55"/><path d="M3 10.8c-1-1.2-.6-2.6.2-3.6M4 11.2c2.4.8 5.6-.6 7.6-3.4 1-1.4 1.6-3 1.2-4.2" fill="none" stroke="#9ad4fa" stroke-width=".8"/><circle cx="3.4" cy="10.6" r=".9" fill="#fff"/></svg>
<div class="a" style="left:228px;top:247px;width:132px;height:19px;background:#3399ff;border:1px dotted #ff8a1a"></div>
<div class="t" style="left:229px;top:247px;line-height:19px;color:#fff">TextNode(&quot;pageTitle&quot;)</div>
<div class="a" style="left:185px;top:275px;width:5px;height:1px;background:repeating-linear-gradient(to right,#a0a0a0 0 1px,transparent 1px 2px)"></div>
<svg style="left:176px;top:271px;" width="9" height="9" viewBox="0 0 9 9"><defs><linearGradient id="bg" x1="0" y1="0" x2="0" y2="1"><stop offset="0" stop-color="#fff"/><stop offset="0.5" stop-color="#f6f6f6"/><stop offset="1" stop-color="#dcdcdc"/></linearGradient></defs><rect x="0.5" y="0.5" width="8" height="8" rx="1.2" fill="url(#bg)" stroke="#9a9a9a"/><rect x="2" y="4" width="5" height="1" fill="#2f4f9e"/><rect x="4" y="2" width="1" height="5" fill="#2f4f9e"/></svg>
<svg style="left:192px;top:268px;" width="14" height="14" viewBox="0 0 14 14"><rect x="0" y="0" width="14" height="14" fill="#f2f5fb"/><path d="M0.5 13.5V0.5H13.5" fill="none" stroke="#9eabc4"/><path d="M0 13.4H13.4V0" fill="none" stroke="#26365a" stroke-width="1.2"/><circle cx="7" cy="6.8" r="4.4" fill="#3f86e0"/><path d="M4.4 3.6c1.4-1 3.2-1 4.4-.4.8.5.4 1.4-.4 1.7-.9.4-1.4 1.2-.8 2 .5.7.4 1.9-.3 2.6-.8.6-1.8 0-2.1-.9-.3-1-1-1.4-1.6-2-.6-.8-.2-2.3.8-3z" fill="#52a848"/><path d="M9.6 4.4c.9.7 1.6 1.8 1.6 2.9-.7.3-1.5-.2-1.7-.9-.3-.6-.4-1.4.1-2z" fill="#52a848"/><ellipse cx="5.6" cy="4.4" rx="2" ry="1.2" fill="#d8f4ff" opacity=".7"/><ellipse cx="8.2" cy="7.6" rx="1.6" ry="1.8" fill="#7fd4ff" opacity=".55"/><path d="M3 10.8c-1-1.2-.6-2.6.2-3.6M4 11.2c2.4.8 5.6-.6 7.6-3.4 1-1.4 1.6-3 1.2-4.2" fill="none" stroke="#9ad4fa" stroke-width=".8"/><circle cx="3.4" cy="10.6" r=".9" fill="#fff"/></svg>
<div class="t" style="left:210px;top:266px;line-height:19px">Section(0)</div>
<div class="a" style="left:166px;top:294px;width:5px;height:1px;background:repeating-linear-gradient(to right,#a0a0a0 0 1px,transparent 1px 2px)"></div>
<svg style="left:157px;top:290px;" width="9" height="9" viewBox="0 0 9 9"><defs><linearGradient id="bg" x1="0" y1="0" x2="0" y2="1"><stop offset="0" stop-color="#fff"/><stop offset="0.5" stop-color="#f6f6f6"/><stop offset="1" stop-color="#dcdcdc"/></linearGradient></defs><rect x="0.5" y="0.5" width="8" height="8" rx="1.2" fill="url(#bg)" stroke="#9a9a9a"/><rect x="2" y="4" width="5" height="1" fill="#2f4f9e"/><rect x="4" y="2" width="1" height="5" fill="#2f4f9e"/></svg>
<svg style="left:173px;top:287px;" width="14" height="14" viewBox="0 0 14 14"><rect x="0" y="0" width="14" height="14" fill="#f2f5fb"/><path d="M0.5 13.5V0.5H13.5" fill="none" stroke="#9eabc4"/><path d="M0 13.4H13.4V0" fill="none" stroke="#26365a" stroke-width="1.2"/><circle cx="7" cy="6.8" r="4.4" fill="#3f86e0"/><path d="M4.4 3.6c1.4-1 3.2-1 4.4-.4.8.5.4 1.4-.4 1.7-.9.4-1.4 1.2-.8 2 .5.7.4 1.9-.3 2.6-.8.6-1.8 0-2.1-.9-.3-1-1-1.4-1.6-2-.6-.8-.2-2.3.8-3z" fill="#52a848"/><path d="M9.6 4.4c.9.7 1.6 1.8 1.6 2.9-.7.3-1.5-.2-1.7-.9-.3-.6-.4-1.4.1-2z" fill="#52a848"/><ellipse cx="5.6" cy="4.4" rx="2" ry="1.2" fill="#d8f4ff" opacity=".7"/><ellipse cx="8.2" cy="7.6" rx="1.6" ry="1.8" fill="#7fd4ff" opacity=".55"/><path d="M3 10.8c-1-1.2-.6-2.6.2-3.6M4 11.2c2.4.8 5.6-.6 7.6-3.4 1-1.4 1.6-3 1.2-4.2" fill="none" stroke="#9ad4fa" stroke-width=".8"/><circle cx="3.4" cy="10.6" r=".9" fill="#fff"/></svg>
<div class="t" style="left:191px;top:285px;line-height:19px;letter-spacing:-0.050px">Section(&quot;image_nav&quot;)</div>
<div class="a" style="left:33px;top:313px;width:5px;height:1px;background:repeating-linear-gradient(to right,#a0a0a0 0 1px,transparent 1px 2px)"></div>
<svg style="left:24px;top:309px;" width="9" height="9" viewBox="0 0 9 9"><defs><linearGradient id="bg" x1="0" y1="0" x2="0" y2="1"><stop offset="0" stop-color="#fff"/><stop offset="0.5" stop-color="#f6f6f6"/><stop offset="1" stop-color="#dcdcdc"/></linearGradient></defs><rect x="0.5" y="0.5" width="8" height="8" rx="1.2" fill="url(#bg)" stroke="#9a9a9a"/><rect x="2" y="4" width="5" height="1" fill="#2f4f9e"/><rect x="4" y="2" width="1" height="5" fill="#2f4f9e"/></svg>
<svg style="left:36px;top:303px;" width="20" height="20" viewBox="0 0 20 20"><defs><linearGradient id="tcg" x1="0" y1="0" x2="0" y2="1"><stop offset="0" stop-color="#2a86d0"/><stop offset="1" stop-color="#0c3a6a"/></linearGradient></defs><path d="M5.2 6.6L10.6 1.8 13.2 2.8 8.2 7.2z" fill="#1f7ac8"/><path d="M2.6 9.2L6.2 8.6 6.2 13z" fill="#1f7ac8"/><path d="M8.4 9.2L10.6 8.8 11 12.6Q12.2 14.4 14 14.6L11.2 17.8Q9.6 17.4 8.8 15.2z" fill="url(#tcg)"/><path d="M13.4 6.8Q15.6 5.4 17.2 6.8L19 9.6 16.2 12.2Q13.4 12 13 9.4z" fill="#1f7ac8"/></svg>
<div class="t" style="left:58px;top:304px;line-height:19px;letter-spacing:-0.057px">Process(&quot;TestComplete&quot;)</div>
<div class="a" style="left:33px;top:332px;width:5px;height:1px;background:repeating-linear-gradient(to right,#a0a0a0 0 1px,transparent 1px 2px)"></div>
<svg style="left:24px;top:328px;" width="9" height="9" viewBox="0 0 9 9"><defs><linearGradient id="bg" x1="0" y1="0" x2="0" y2="1"><stop offset="0" stop-color="#fff"/><stop offset="0.5" stop-color="#f6f6f6"/><stop offset="1" stop-color="#dcdcdc"/></linearGradient></defs><rect x="0.5" y="0.5" width="8" height="8" rx="1.2" fill="url(#bg)" stroke="#9a9a9a"/><rect x="2" y="4" width="5" height="1" fill="#2f4f9e"/><rect x="4" y="2" width="1" height="5" fill="#2f4f9e"/></svg>
<svg style="left:39px;top:326px;" width="16" height="16" viewBox="0 0 16 16"><path d="M0.5 2.5Q0.5 1.5 1.5 1.5H6.5L7.5 2.5H14.5Q15.5 2.5 15.5 3.5V13.5H0.5z" fill="#f2d88a" stroke="#cfa84a"/><rect x="1.5" y="1.5" width="5" height="1.6" fill="#fff6d8"/><rect x="2" y="1.6" width="1.6" height="1.2" fill="#3ad03a"/><path d="M1 5.5H15V13.5H1z" fill="#f4dc90"/><path d="M2.5 14.5V9.2Q2.5 6.8 5 6.8H11Q13.5 6.8 13.5 9.2V14.5H10.5V11H5.5V14.5z" fill="#4aa8e8"/><path d="M3.5 9Q3.5 7.8 5 7.8H11Q12.5 7.8 12.5 9" fill="none" stroke="#c8ecff" stroke-width="1"/></svg>
<div class="t" style="left:58px;top:323px;line-height:19px">Process(&quot;explorer&quot;)</div>
<svg style="left:345px;top:41px;" width="14" height="14" viewBox="0 0 14 14"><defs><linearGradient id="tdg" x1="0" y1="0" x2="0" y2="1"><stop offset="0" stop-color="#1f7acc"/><stop offset="1" stop-color="#0a3563"/></linearGradient></defs><path d="M7 0L14 7 7 14 0 7z" fill="url(#tdg)"/><path d="M1.6 7.2L8.2 4.6M5.6 6.2L6.4 11.2" fill="none" stroke="#fff" stroke-width="1.5"/><path d="M10.6 3.6Q8.4 4.4 8.6 7.2 8.9 9.6 11 10.4" fill="none" stroke="#fff" stroke-width="1.5"/></svg>
</div>
<div class="a" style="left:20px;top:616px;width:360px;height:16px;background:#f0f0f0;"></div>
<div class="a" style="left:37px;top:616px;width:261px;height:15px;background:#cdcdcd;"></div>
<svg style="left:24px;top:620px;" width="8" height="8" viewBox="0 0 8 8"><path d="M5.5 0.5L2 4l3.5 3.5" fill="none" stroke="#606060" stroke-width="1.6"/></svg>
<svg style="left:367px;top:620px;" width="8" height="8" viewBox="0 0 8 8"><path d="M2.5 0.5L6 4 2.5 7.5" fill="none" stroke="#606060" stroke-width="1.6"/></svg>
<div class="t" style="left:10px;top:347.5px;transform:translate(-50%,-50%) rotate(-90deg);font-weight:bold;letter-spacing:0.38px;line-height:13px">Invisible objects and processes are not displayed.</div>
<div class="a" style="left:381px;top:22px;width:585px;height:611px;background:#f0f0f0;"></div>
<svg style="left:392px;top:29px;" width="20" height="20" viewBox="0 0 20 20"><circle cx="9.5" cy="10" r="9" fill="#f8f8f8" stroke="#b4b4b4" stroke-width="1.3"/><path d="M14.5 10H5.5M9.5 6L5.5 10l4 4" fill="none" stroke="#b4b4b4" stroke-width="2"/></svg>
<div class="a" style="left:423px;top:28px;width:390px;height:20px;overflow:hidden">
<div class="t" style="left:-2px;top:4px;;letter-spacing:-0.013px">nelContenthost.panelPagecontrol.panelFragmentHub.header.textnodePagetitle</div>
</div>
<div class="a" style="left:816px;top:29px;width:146px;height:21px;background:#fff;border:1px solid #abadb3"></div>
<div class="t" style="left:819px;top:33px;font-style:italic;color:#6d6d6d;letter-spacing:-0.312px">Search</div>
<svg style="left:929px;top:33px;" width="14" height="14" viewBox="0 0 14 14"><circle cx="8.5" cy="5.5" r="3.8" fill="none" stroke="#1560d0" stroke-width="1.8"/><path d="M6 8L1.5 12.5" stroke="#1560d0" stroke-width="2.4" stroke-linecap="round"/></svg>
<div class="a" style="left:945px;top:31px;width:16px;height:17px;background:#e9e9e9;border:1px solid #d6d6d6"></div>
<svg style="left:949px;top:37px;" width="8" height="5" viewBox="0 0 8 5"><path d="M0 0H8L4 4.5z" fill="#8a8a8a"/></svg>
<div class="a" style="left:385px;top:75px;width:579px;height:501px;background:#fff;border:1px solid #a0a0a0"></div>
<div class="a" style="left:449px;top:57px;width:52px;height:19px;background:#f0f0f0;border:1px solid #a0a0a0"></div>
<div class="a" style="left:501px;top:57px;width:43px;height:19px;background:#f0f0f0;border:1px solid #a0a0a0"></div>
<div class="a" style="left:385px;top:55px;width:65px;height:22px;background:#fff;border:1px solid #a0a0a0;border-bottom:none"></div>
<div class="t" style="left:392px;top:59px;;letter-spacing:0.134px">Properties</div>
<div class="t" style="left:453px;top:61px;;letter-spacing:0.040px">Methods</div>
<div class="t" style="left:506px;top:61px;;letter-spacing:0.224px">Events</div>
<div class="a" style="left:389px;top:79px;width:573px;height:25px;background:#a9a9a9;"></div>
<div class="t" style="left:397px;top:85px;font-weight:bold;color:#fff;letter-spacing:0.421px">Advanced view</div>
<div class="t" style="left:505px;top:85px;color:#fff;text-decoration:underline;letter-spacing:-0.279px">View basic members (Basic view)</div>
<div class="a" style="left:389px;top:104px;width:573px;height:468px;background:#f0f0f0;border:1px solid #6f7685;border-top:none"></div>
<div class="a" style="left:389px;top:104px;width:573px;height:1px;background:#7f8591;"></div>
<div class="a" style="left:587px;top:105px;width:357px;height:466px;background:#fff;"></div>
<div class="a" style="left:944px;top:105px;width:17px;height:466px;background:#f0f0f0;"></div>
<div class="a" style="left:945px;top:152px;width:15px;height:44px;background:#cdcdcd;"></div>
<svg style="left:948px;top:111px;" width="10" height="6" viewBox="0 0 10 6"><path d="M1 5.5L5 1.5l4 4" fill="none" stroke="#505050" stroke-width="1.8"/></svg>
<svg style="left:948px;top:561px;" width="10" height="6" viewBox="0 0 10 6"><path d="M1 0.5L5 4.5l4-4" fill="none" stroke="#505050" stroke-width="1.8"/></svg>
<div class="a" style="left:390px;top:105px;width:571px;height:466px;overflow:hidden">
<div class="t" style="left:28px;top:2px;line-height:17px;letter-spacing:-0.343px">VisibleOnScreen</div>
<div class="t" style="left:199px;top:2px;line-height:17px;letter-spacing:-0.525px">False</div>
<div class="t" style="left:28px;top:20px;line-height:17px;letter-spacing:0.325px">Width</div>
<div class="t" style="left:199px;top:20px;line-height:17px;letter-spacing:0.200px">316</div>
<div class="a" style="left:197px;top:37px;width:357px;height:17px;background:#f0f0f0;"></div>
<svg style="left:2px;top:41px;" width="9" height="9" viewBox="0 0 9 9"><defs><linearGradient id="bg" x1="0" y1="0" x2="0" y2="1"><stop offset="0" stop-color="#fff"/><stop offset="0.5" stop-color="#f6f6f6"/><stop offset="1" stop-color="#dcdcdc"/></linearGradient></defs><rect x="0.5" y="0.5" width="8" height="8" rx="1.2" fill="url(#bg)" stroke="#9a9a9a"/><rect x="2" y="4" width="5" height="1" fill="#2f4f9e"/></svg>
<div class="t" style="left:16px;top:38px;line-height:17px;font-weight:bold;color:#6d6d6d;letter-spacing:0.486px">Extended</div>
<div class="t" style="left:28px;top:56px;line-height:17px;letter-spacing:0.450px">contentText</div>
<div class="t" style="left:199px;top:56px;line-height:17px;letter-spacing:-0.018px">October 2013</div>
<div class="t" style="left:28px;top:74px;line-height:17px;letter-spacing:-0.075px">idStr</div>
<div class="t" style="left:199px;top:74px;line-height:17px;letter-spacing:-0.100px">pageTitle</div>
<div class="t" style="left:28px;top:92px;line-height:17px;letter-spacing:-0.210px">namePropStr</div>
<div class="t" style="left:28px;top:110px;line-height:17px;letter-spacing:0.200px">ObjectIdentifier</div>
<div class="t" style="left:199px;top:110px;line-height:17px;letter-spacing:-0.100px">pageTitle</div>
<div class="t" style="left:28px;top:128px;line-height:17px;letter-spacing:-0.111px">ObjectType</div>
<div class="t" style="left:199px;top:128px;line-height:17px;letter-spacing:0.043px">TextNode</div>
<div class="a" style="left:197px;top:145px;width:357px;height:17px;background:#f0f0f0;"></div>
<svg style="left:2px;top:149px;" width="9" height="9" viewBox="0 0 9 9"><defs><linearGradient id="bg" x1="0" y1="0" x2="0" y2="1"><stop offset="0" stop-color="#fff"/><stop offset="0.5" stop-color="#f6f6f6"/><stop offset="1" stop-color="#dcdcdc"/></linearGradient></defs><rect x="0.5" y="0.5" width="8" height="8" rx="1.2" fill="url(#bg)" stroke="#9a9a9a"/><rect x="2" y="4" width="5" height="1" fill="#2f4f9e"/></svg>
<div class="t" style="left:16px;top:146px;line-height:17px;font-weight:bold;color:#6d6d6d;letter-spacing:0.613px">Internet Explorer</div>
<svg style="left:17px;top:169px;" width="7" height="7" viewBox="0 0 7 7"><circle cx="3" cy="3" r="2.2" fill="none" stroke="#9a9a9a" stroke-width="1.7"/></svg>
<div class="t" style="left:28px;top:164px;line-height:17px;letter-spacing:-0.337px">accessKey</div>
<div class="t" style="left:28px;top:182px;line-height:17px;letter-spacing:0.050px">all</div>
<div class="t" style="left:199px;top:182px;line-height:17px;letter-spacing:-0.182px">[object HTMLCollection]</div>
<svg style="left:17px;top:206px;" width="7" height="7" viewBox="0 0 7 7"><circle cx="3" cy="3" r="2.2" fill="none" stroke="#9a9a9a" stroke-width="1.7"/></svg>
<div class="t" style="left:28px;top:201px;line-height:17px;letter-spacing:0.032px">ariaActivedescendant</div>
<svg style="left:17px;top:224px;" width="7" height="7" viewBox="0 0 7 7"><circle cx="3" cy="3" r="2.2" fill="none" stroke="#9a9a9a" stroke-width="1.7"/></svg>
<div class="t" style="left:28px;top:219px;line-height:17px;letter-spacing:-0.100px">ariaBusy</div>
<svg style="left:17px;top:242px;" width="7" height="7" viewBox="0 0 7 7"><circle cx="3" cy="3" r="2.2" fill="none" stroke="#9a9a9a" stroke-width="1.7"/></svg>
<div class="t" style="left:28px;top:237px;line-height:17px;letter-spacing:-0.190px">ariaChecked</div>
<svg style="left:17px;top:260px;" width="7" height="7" viewBox="0 0 7 7"><circle cx="3" cy="3" r="2.2" fill="none" stroke="#9a9a9a" stroke-width="1.7"/></svg>
<div class="t" style="left:28px;top:255px;line-height:17px;letter-spacing:-0.082px">ariaControls</div>
<svg style="left:17px;top:278px;" width="7" height="7" viewBox="0 0 7 7"><circle cx="3" cy="3" r="2.2" fill="none" stroke="#9a9a9a" stroke-width="1.7"/></svg>
<div class="t" style="left:28px;top:273px;line-height:17px;letter-spacing:-0.107px">ariaDescribedby</div>
<svg style="left:17px;top:296px;" width="7" height="7" viewBox="0 0 7 7"><circle cx="3" cy="3" r="2.2" fill="none" stroke="#9a9a9a" stroke-width="1.7"/></svg>
<div class="t" style="left:28px;top:291px;line-height:17px;letter-spacing:-0.145px">ariaDisabled</div>
<svg style="left:17px;top:314px;" width="7" height="7" viewBox="0 0 7 7"><circle cx="3" cy="3" r="2.2" fill="none" stroke="#9a9a9a" stroke-width="1.7"/></svg>
<div class="t" style="left:28px;top:309px;line-height:17px;letter-spacing:-0.064px">ariaExpanded</div>
<svg style="left:17px;top:332px;" width="7" height="7" viewBox="0 0 7 7"><circle cx="3" cy="3" r="2.2" fill="none" stroke="#9a9a9a" stroke-width="1.7"/></svg>
<div class="t" style="left:28px;top:327px;line-height:17px;letter-spacing:-0.011px">ariaFlowto</div>
<svg style="left:17px;top:350px;" width="7" height="7" viewBox="0 0 7 7"><circle cx="3" cy="3" r="2.2" fill="none" stroke="#9a9a9a" stroke-width="1.7"/></svg>
<div class="t" style="left:28px;top:345px;line-height:17px;letter-spacing:-0.155px">ariaHaspopup</div>
<svg style="left:17px;top:368px;" width="7" height="7" viewBox="0 0 7 7"><circle cx="3" cy="3" r="2.2" fill="none" stroke="#9a9a9a" stroke-width="1.7"/></svg>
<div class="t" style="left:28px;top:363px;line-height:17px;letter-spacing:-0.078px">ariaHidden</div>
<svg style="left:17px;top:386px;" width="7" height="7" viewBox="0 0 7 7"><circle cx="3" cy="3" r="2.2" fill="none" stroke="#9a9a9a" stroke-width="1.7"/></svg>
<div class="t" style="left:28px;top:381px;line-height:17px;letter-spacing:0.140px">ariaInvalid</div>
<svg style="left:17px;top:404px;" width="7" height="7" viewBox="0 0 7 7"><circle cx="3" cy="3" r="2.2" fill="none" stroke="#9a9a9a" stroke-width="1.7"/></svg>
<div class="t" style="left:28px;top:399px;line-height:17px;letter-spacing:-0.146px">ariaLabelledby</div>
<svg style="left:17px;top:422px;" width="7" height="7" viewBox="0 0 7 7"><circle cx="3" cy="3" r="2.2" fill="none" stroke="#9a9a9a" stroke-width="1.7"/></svg>
<div class="t" style="left:28px;top:417px;line-height:17px;letter-spacing:-0.075px">ariaLevel</div>
<div class="t" style="left:199px;top:417px;line-height:17px;letter-spacing:0.000px">0</div>
<svg style="left:17px;top:440px;" width="7" height="7" viewBox="0 0 7 7"><circle cx="3" cy="3" r="2.2" fill="none" stroke="#9a9a9a" stroke-width="1.7"/></svg>
<div class="t" style="left:28px;top:435px;line-height:17px;letter-spacing:-0.129px">ariaLive</div>
<svg style="left:17px;top:458px;" width="7" height="7" viewBox="0 0 7 7"><circle cx="3" cy="3" r="2.2" fill="none" stroke="#9a9a9a" stroke-width="1.7"/></svg>
<div class="t" style="left:28px;top:453px;line-height:17px;letter-spacing:-0.111px">ariaMultiselectable</div>
<div class="a" style="left:13px;top:18px;width:541px;height:1px;background:#a0a0a0;"></div>
<div class="a" style="left:0px;top:36px;width:554px;height:1px;background:#a0a0a0;"></div>
<div class="a" style="left:13px;top:54px;width:541px;height:1px;background:#a0a0a0;"></div>
<div class="a" style="left:13px;top:72px;width:541px;height:1px;background:#a0a0a0;"></div>
<div class="a" style="left:13px;top:90px;width:541px;height:1px;background:#a0a0a0;"></div>
<div class="a" style="left:13px;top:108px;width:541px;height:1px;background:#a0a0a0;"></div>
<div class="a" style="left:13px;top:126px;width:541px;height:1px;background:#a0a0a0;"></div>
<div class="a" style="left:0px;top:144px;width:554px;height:1px;background:#a0a0a0;"></div>
<div class="a" style="left:13px;top:162px;width:541px;height:1px;background:#a0a0a0;"></div>
<div class="a" style="left:13px;top:180px;width:541px;height:1px;background:#a0a0a0;"></div>
<div class="a" style="left:13px;top:199px;width:541px;height:1px;background:#a0a0a0;"></div>
<div class="a" style="left:13px;top:217px;width:541px;height:1px;background:#a0a0a0;"></div>
<div class="a" style="left:13px;top:235px;width:541px;height:1px;background:#a0a0a0;"></div>
<div class="a" style="left:13px;top:253px;width:541px;height:1px;background:#a0a0a0;"></div>
<div class="a" style="left:13px;top:271px;width:541px;height:1px;background:#a0a0a0;"></div>
<div class="a" style="left:13px;top:289px;width:541px;height:1px;background:#a0a0a0;"></div>
<div class="a" style="left:13px;top:307px;width:541px;height:1px;background:#a0a0a0;"></div>
<div class="a" style="left:13px;top:325px;width:541px;height:1px;background:#a0a0a0;"></div>
<div class="a" style="left:13px;top:343px;width:541px;height:1px;background:#a0a0a0;"></div>
<div class="a" style="left:13px;top:361px;width:541px;height:1px;background:#a0a0a0;"></div>
<div class="a" style="left:13px;top:379px;width:541px;height:1px;background:#a0a0a0;"></div>
<div class="a" style="left:13px;top:397px;width:541px;height:1px;background:#a0a0a0;"></div>
<div class="a" style="left:13px;top:415px;width:541px;height:1px;background:#a0a0a0;"></div>
<div class="a" style="left:13px;top:433px;width:541px;height:1px;background:#a0a0a0;"></div>
<div class="a" style="left:13px;top:451px;width:541px;height:1px;background:#a0a0a0;"></div>
<div class="a" style="left:537px;top:183px;width:15px;height:14px;background:#e8e8e8;border:1px solid #a0a0a0;background:linear-gradient(#f4f4f4,#e2e2e2)"></div>
<svg style="left:540px;top:188px;" width="9" height="3" viewBox="0 0 9 3"><rect x="1" y="0.8" width="1.2" height="1.2" fill="#111"/><rect x="4" y="0.8" width="1.2" height="1.2" fill="#111"/><rect x="7" y="0.8" width="1.2" height="1.2" fill="#111"/></svg>
</div>
<div class="a" style="left:385px;top:587px;width:578px;height:44px;background:transparent;border:1px solid #dcdcdc"></div>
<div class="a" style="left:392px;top:581px;width:58px;height:14px;background:#f0f0f0;"></div>
<div class="t" style="left:395px;top:582px;;letter-spacing:-0.003px">Description</div>
<svg style="left:0px;top:0px;" width="970" height="637" viewBox="0 0 970 637"><path d="M387.9 244.5H956.9Q963.9 244.5 965.4 253.0V569.8Q965.4 576.8 956.9 578.3H389.9L382.4 572.8V250.0z" fill="none" stroke="#ff8040" stroke-width="2.4" stroke-linejoin="round"/></svg>
</body></html>
